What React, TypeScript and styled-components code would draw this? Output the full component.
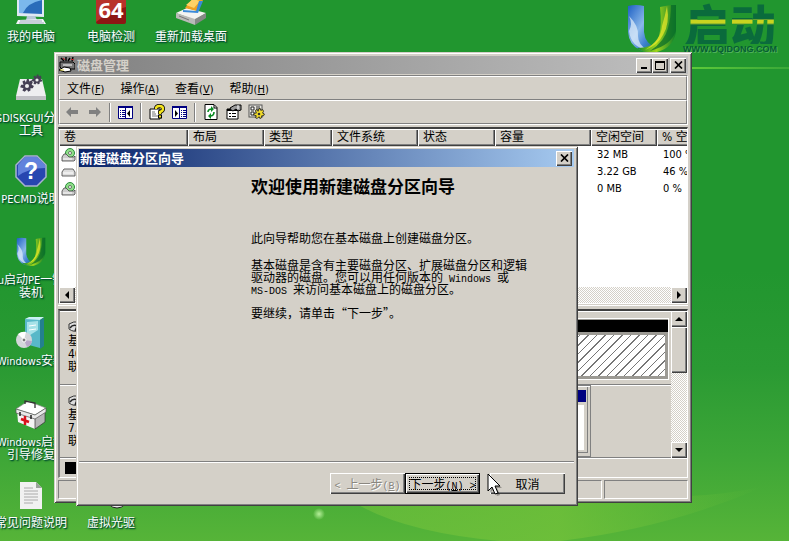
import React from "react";
import styled, { createGlobalStyle, css } from "styled-components";

const FACE = "#d4d0c8";
const SHADE = "#808080";
const DARK = "#404040";
const UI = `"DejaVu Sans Condensed", "Noto Sans CJK SC", sans-serif`;
const CJK = `"Noto Sans CJK SC", sans-serif`;

const Global = createGlobalStyle`
  * { box-sizing: border-box; }
  body { margin: 0; font: 12px/12px ${CJK}; color: #000; }
  button { font: inherit; color: inherit; margin: 0; padding: 0; border: 0; background: none; }
  svg { display: block; flex: none; }
`;

const raised = css`
  background: ${FACE};
  box-shadow: inset 1px 1px #fff, inset -1px -1px ${DARK}, inset -2px -2px ${SHADE};
`;
const dither = css`
  background: repeating-conic-gradient(#fff 0 25%, ${FACE} 0 50%) 0 0 / 2px 2px;
`;

/* ---------- desktop ---------- */
const Desktop = styled.main`
  position: relative;
  min-height: 100vh;
  overflow: hidden;
  background: linear-gradient(#21962f 0%, #21962f 50%, #2a9a33 68%, #3da637 84%, #56b438 100%);
`;
const Wallpaper = styled.svg`
  position: absolute;
  inset: 0;
  width: 100%;
  height: 100%;
`;
const Brand = styled.a`
  position: absolute;
  top: 2px;
  right: 12px;
  display: flex;
  gap: 4px;
  text-decoration: none;
`;
const BrandWords = styled.span`
  display: flex;
  flex-direction: column;
  align-items: center;
`;
const BrandName = styled.span`
  font: 900 46px/42px ${CJK};
  color: transparent;
  background: linear-gradient(#0a6b3c 0 17px, #c8d420 18px 21px, #0a6b3c 23px);
  background-clip: text;
  -webkit-background-clip: text;
`;
const BrandSite = styled.span`
  font: bold 9px/10px "Liberation Sans", sans-serif;
  color: #075c33;
  text-shadow: 1px 1px #4fb05a;
`;
const IconGrid = styled.nav`
  position: relative;
  display: grid;
  grid-auto-flow: column;
  grid-template-rows: repeat(7, 81px);
  grid-auto-columns: 80px;
  margin: -7px 0 0 -9px;
  height: 548px;
`;
const Shortcut = styled.button<{ $row: number; $col: number }>`
  grid-row: ${(p) => p.$row};
  grid-column: ${(p) => p.$col};
  display: flex;
  flex-direction: column;
  align-items: center;
  justify-content: flex-start;
  gap: 5px;
`;
const ShortcutLabel = styled.span`
  color: #fff;
  line-height: 12px;
  white-space: pre;
  text-align: center;
  text-shadow: 1px 1px 1px #053, 1px 1px 2px #042;
`;
const Latin = styled.span`
  font: 11px/1 ${UI};
`;

/* ---------- windows ---------- */
const Frame = styled.section`
  position: absolute;
  display: flex;
  flex-direction: column;
  background: ${FACE};
  box-shadow: inset 1px 1px ${FACE}, inset -1px -1px ${DARK}, inset 2px 2px #fff, inset -2px -2px ${SHADE};
`;
const MainWindow = styled(Frame)`
  inset: 52px 97px 38px 54px;
  padding: 4px;
`;
const WizardWindow = styled(Frame)`
  inset: 146px 211px 35px 76px;
  padding: 3px 4px 3px 3px;
`;
const TitleBar = styled.header<{ $active?: boolean }>`
  display: flex;
  align-items: center;
  flex: none;
  height: 18px;
  padding: 0 2px 0 1px;
  gap: 2px;
  color: ${(p) => (p.$active ? "#fff" : FACE)};
  background: ${(p) =>
    p.$active ? "linear-gradient(90deg, #0a246a, #a6caf0)" : "linear-gradient(90deg, #808080, #c0c0c0)"};
`;
const TitleText = styled.h1`
  flex: 1;
  margin: 0;
  font: bold 13px/16px ${CJK};
`;
const Captions = styled.div`
  display: flex;
`;
const CaptionButton = styled.button<{ $gap?: boolean }>`
  ${raised}
  display: grid;
  place-items: center;
  width: 16px;
  height: 15px;
  margin-left: ${(p) => (p.$gap ? "2px" : "0")};
`;

const Rebar = styled.div`
  flex: none;
  margin-top: 1px;
  border: solid;
  border-width: 1px;
  border-color: ${SHADE} #fff #fff ${SHADE};
`;
const Band = styled.div`
  display: flex;
  align-items: center;
  height: 24px;
  border: solid;
  border-width: 1px;
  border-color: #fff ${SHADE} ${SHADE} #fff;
`;
const MenuBand = styled(Band)`
  gap: 16px;
  padding-left: 7px;
`;
const MenuButton = styled.button`
  line-height: 16px;
  white-space: nowrap;
`;
const ToolButton = styled.button`
  display: grid;
  place-items: center;
  width: 23px;
  height: 22px;
`;
const Divider = styled.i`
  width: 2px;
  height: 19px;
  margin: 0 3px;
  border-left: 1px solid ${SHADE};
  border-right: 1px solid #fff;
`;

const Sunken = styled.div`
  border: solid;
  border-width: 2px 1px 1px 2px;
  border-color: ${DARK} #fff #fff ${SHADE};
`;
const ListPane = styled(Sunken)`
  flex: none;
  display: flex;
  flex-direction: column;
  height: 177px;
  margin-top: 2px;
  border-left-width: 1px;
`;
const ListView = styled.div`
  flex: 1;
  overflow: hidden;
  background: #fff;
`;
const Volumes = styled.table`
  table-layout: fixed;
  width: 658px;
  border-collapse: separate;
  border-spacing: 0;
  th {
    ${raised}
    height: 17px;
    padding: 0 5px;
    text-align: left;
    font: 12px/15px ${UI};
  }
  td {
    height: 17px;
    padding: 0 6px;
    font: 11px/16px ${UI};
    white-space: nowrap;
  }
  td:first-child { padding: 0 2px; }
`;
const ScrollRow = styled.div`
  ${dither}
  display: flex;
  justify-content: space-between;
  height: 16px;
`;
const ScrollButton = styled.button`
  ${raised}
  display: grid;
  place-items: center;
  flex: none;
  width: 16px;
  height: 16px;
`;
const Splitter = styled.div`
  flex: none;
  height: 4px;
  margin-top: 1px;
  border-top: 1px solid #fff;
`;
const LowerPane = styled(Sunken)`
  flex: 1;
  display: flex;
  flex-direction: column;
`;
const DiskArea = styled.div`
  display: flex;
  height: 147px;
`;
const DiskList = styled.div`
  flex: 1;
  display: flex;
  flex-direction: column;
`;
const DiskRow = styled.div`
  flex: 1;
  display: flex;
  border-bottom: 1px solid ${SHADE};
  box-shadow: inset 0 1px #fff;
`;
const DiskInfo = styled.div`
  width: 108px;
  padding: 10px 0 0 8px;
  font: 12px/13px ${UI};
  p { margin: 0; }
  svg { margin-bottom: 2px; }
`;
const Partition = styled.div<{ $share: string; $selected?: boolean }>`
  width: ${(p) => p.$share};
  display: flex;
  flex-direction: column;
  gap: 3px;
  margin: ${(p) => (p.$selected ? "7px 0 4px" : "0")};
  padding: ${(p) => (p.$selected ? "1px 0 0" : "4px 4px 6px")};
  border: 1px solid ${(p) => (p.$selected ? "#fff" : SHADE)};
  background: ${(p) => (p.$selected ? "#9c9a94" : FACE)};
  box-shadow: ${(p) => (p.$selected ? "none" : `inset 1px 1px #fff, inset -2px -3px ${FACE}, inset -3px -4px ${SHADE}`)};
`;
const PartitionBar = styled.div<{ $color: string }>`
  height: 12px;
  background: ${(p) => p.$color};
`;
const PartitionBody = styled.div<{ $hatched?: boolean }>`
  flex: 1;
  margin: ${(p) => (p.$hatched ? "0 3px 3px" : "0 2px 0 0")};
  background: ${(p) => (p.$hatched ? "repeating-linear-gradient(135deg, #777 0 1px, #fff 1px 6px)" : "#fff")};
`;
const ScrollColumn = styled.div`
  ${dither}
  display: flex;
  flex-direction: column;
  width: 16px;
`;
const Thumb = styled.div`
  ${raised}
  height: 46px;
  margin-bottom: auto;
`;
const Legend = styled.div`
  flex: 1;
  padding: 3px 5px;
  border-top: 1px solid #fff;
`;
const LegendSwatch = styled.i`
  display: block;
  width: 12px;
  height: 12px;
  background: #000;
`;
const StatusBar = styled.footer`
  flex: none;
  display: flex;
  gap: 2px;
  height: 19px;
  margin-top: 2px;
`;
const StatusCell = styled.div<{ $width?: string }>`
  flex: ${(p) => (p.$width ? `0 0 ${p.$width}` : "1")};
  border: solid;
  border-width: 1px;
  border-color: ${SHADE} #fff #fff ${SHADE};
`;

/* ---------- wizard ---------- */
const WizardBody = styled.div`
  flex: 1;
  padding: 9px 16px 0 172px;
  h2 { margin: 0; font: bold 17px/20px ${CJK}; }
  p { margin: 0 0 15px; line-height: 12px; white-space: pre-line; }
  p + p + p { margin-top: -3px; }
  h2 + p { margin-top: 36px; }
`;
const Mono = styled.span`
  font: 10px/0 "Liberation Mono", monospace;
  white-space: pre;
`;
const WizardFooter = styled.footer`
  flex: none;
  display: flex;
  justify-content: flex-end;
  height: 42px;
  padding: 11px 9px 0;
  border-top: 1px solid ${SHADE};
  box-shadow: inset 0 1px #fff;
`;
const PushButton = styled.button<{ $primary?: boolean; $gap?: boolean }>`
  ${raised}
  position: relative;
  width: 75px;
  height: 21px;
  margin-left: ${(p) => (p.$gap ? "10px" : "0")};
  white-space: nowrap;
  &:disabled {
    color: #8a8780;
    text-shadow: 1px 1px #fff;
  }
  ${(p) =>
    p.$primary &&
    css`
      border: 1px solid #000;
      outline: 1px dotted #000;
      outline-offset: -5px;
    `}
`;
const Pointer = styled.svg`
  position: absolute;
  left: 411px;
  top: 327px;
`;

/* ---------- drawings ---------- */
const Ribbon = ({ size = 54, id }: { size?: number; id: string }) => (
  <svg width={size} height={size} viewBox="0 0 54 54">
    <defs>
      <linearGradient id={`${id}b`} x1="0" y1="0" x2="1" y2="1">
        <stop offset="0" stopColor="#1c5fc4" />
        <stop offset=".45" stopColor="#8ab8ea" />
        <stop offset=".7" stopColor="#3d7fd0" />
        <stop offset="1" stopColor="#0f7a40" />
      </linearGradient>
      <linearGradient id={`${id}g`} x1="0" y1="0" x2="1" y2="0">
        <stop offset="0" stopColor="#128a2c" />
        <stop offset=".5" stopColor="#9fd41c" />
        <stop offset="1" stopColor="#0d7c2b" />
      </linearGradient>
    </defs>
    <path d="M3 4Q11 2 19 4V30Q20 42 32 46Q24 52 15 48Q4 43 3 30Z" fill={`url(#${id}b)`} />
    <path d="M4 14Q14 24 13 34Q13 42 22 48Q6 45 4 29Q8 22 4 14Z" fill="#e2effb" opacity=".7" />
    <path d="M35 5Q43 3 51 3V30Q48 46 32 50Q20 52 12 46Q30 46 34 34Q37 24 35 5Z" fill={`url(#${id}g)`} />
    <path d="M42 4Q45 22 38 33Q33 43 20 48Q36 38 37 24Q40 14 42 4Z" fill="#eeea2a" opacity=".7" />
    <path d="M46 3H51V28Q47 43 25 49Q40 39 43 26Q46 16 46 3Z" fill="#0a6e2a" opacity=".75" />
  </svg>
);

const Art = ({ children }: { children: React.ReactNode }) => (
  <svg width="32" height="32" viewBox="0 0 32 32">{children}</svg>
);
const Computer = () => (
  <Art>
    <path d="M2 3L29 1V24L2 23Z" fill="#dfe9f3" />
    <path d="M4 5L27 3V21L4 20Z" fill="#2a6cba" />
    <path d="M4 5L27 3V7Q12 10 8 20H4Z" fill="#7bb8ec" />
    <path d="M12 23H20L22 27H11Z" fill="#b8c8d8" />
    <path d="M3 27L28 26L31 31H1Z" fill="#f2f5f8" />
    <path d="M5 28H27M4 30H29" stroke="#9cabb8" />
  </Art>
);
const Chip64 = () => (
  <Art>
    <rect x="1" y="1" width="30" height="30" rx="2" fill="#8d1714" />
    <path d="M1 1H31V14Q14 18 1 29Z" fill="#b8322a" />
    <text x="16" y="25" textAnchor="middle" fill="#fff" fontFamily="Open Sans" fontWeight="bold" fontSize="22">64</text>
  </Art>
);
const Reload = () => (
  <Art>
    <path d="M1 20L12 15L31 20L20 27Z" fill="#f3f3f1" />
    <path d="M1 20L20 26V32L1 25Z" fill="#b9bab7" />
    <path d="M20 26L31 20V25L20 32Z" fill="#858885" />
    <path d="M4 23L14 27" stroke="#777" />
    <path d="M10 15L18 5L28 7L22 18Z" fill="#f0a020" />
    <path d="M11 12L18 6L25 8L19 15Z" fill="#ffd166" />
    <path d="M8 17L21 18L24 8L28 8L23 20L8 19Z" fill="#3b8ad8" />
  </Art>
);
const gearPath = "M0-6L1.5-6L2-4L4-5L5-3L4-1L6 0L5 2L3 2L3 4L1 5L0 3L-2 5L-4 4L-3 2L-6 1L-5-1L-3-1L-4-4L-2-5L-1-3Z";
const Gears = () => (
  <Art>
    <path d="M5 5H27L31 22H1Z" fill="#eeeef0" />
    <path d="M1 22H31V26H1Z" fill="#bfbfc4" />
    <path d={gearPath} transform="translate(12 12) scale(1.15)" fill="#453f54" />
    <circle cx="12" cy="12" r="2" fill="#eee" />
    <path d={gearPath} transform="translate(22 6) scale(.9)" fill="#453f54" />
    <circle cx="22" cy="6" r="1.6" fill="#eee" />
  </Art>
);
const Help = () => (
  <Art>
    <path d="M10 1H22L31 10V22L22 31H10L1 22V10Z" fill="#2746b0" stroke="#a9b2d0" strokeWidth="1.5" />
    <path d="M10 2H22L30 10V13Q14 13 3 21V10Z" fill="#6282dc" />
    <text x="16" y="24" textAnchor="middle" fill="#fff" fontFamily="Liberation Sans" fontWeight="bold" fontSize="23">?</text>
  </Art>
);
const Installer = () => (
  <Art>
    <path d="M10 2L25 0V31L10 27Z" fill="#58b8c8" />
    <path d="M10 2L14 0H29L25 3Z" fill="#c9f0f4" />
    <path d="M25 3L29 1V29L25 32Z" fill="#23808f" />
    <path d="M12 5L23 4V13L12 20Z" fill="#a6e2e8" />
    <path d="M14 9L21 8M14 13L21 12" stroke="#fff" />
    <circle cx="9" cy="23" r="8" fill="#d4d6da" />
    <path d="M9 23L3 17Q7 14 11 15Z" fill="#fff" />
    <path d="M9 23L17 24Q16 29 12 30Z" fill="#b8a8c8" />
    <circle cx="9" cy="23" r="2" fill="#777" stroke="#fff" />
  </Art>
);
const Medkit = () => (
  <Art>
    <path d="M1 11L13 3L31 10L20 17Z" fill="#fff" stroke="#8b8b8b" strokeWidth=".7" />
    <path d="M2 12L20 18V31L3 24Z" fill="#f4f4f4" />
    <path d="M20 18L30 11V24L20 31Z" fill="#b7b7b7" stroke="#333" strokeWidth=".7" />
    <path d="M1 11V15L20 21L31 14V10L20 17Z" fill="#e9e9e9" stroke="#555" strokeWidth=".7" />
    <path d="M10 6V3L20 5V10" fill="none" stroke="#333" strokeWidth="1.3" />
    <path d="M10 18V27M6 21L14 24" stroke="#d8121c" strokeWidth="2.5" />
    <path d="M5 14V18M16 17V21" stroke="#222" strokeWidth="1.5" />
  </Art>
);
const Note = () => (
  <Art>
    <path d="M5 3H21L27 9V30H5Z" fill="#f1f1f1" />
    <path d="M21 3V9H27Z" fill="#9aa39a" />
    <path d="M9 9H18M9 12H23M9 15H23M9 18H23M9 21H23M9 24H18" stroke="#aaa" />
  </Art>
);
const Disc = () => (
  <Art>
    <circle cx="22" cy="18" r="11" fill="#e8e8e8" stroke="#222" />
    <circle cx="22" cy="18" r="4" fill="#444" />
  </Art>
);

const AppIcon = () => (
  <svg width="16" height="16" viewBox="0 0 16 16">
    <path d="M1 5H14L16 7V12H3L1 10Z" fill="#777" stroke="#000" />
    <path d="M2 1L5 4M7 0V4M11 1L9 4M14 0L13 4" stroke="#000" strokeWidth="1.4" />
    <path d="M4 1L6 3M12 2L15 3" stroke="#c22" />
    <path d="M4 8H13" stroke="#fff" />
    <path d="M0 13L5 10L11 11L12 14L6 15Z" fill="#fff" stroke="#000" />
    <path d="M1 13H5" stroke="#dcd13a" />
  </svg>
);
const Arrow = ({ flip }: { flip?: boolean }) => (
  <svg width="14" height="12" viewBox="0 0 14 12">
    <path d="M1 6L6 1V4H13V8H6V11Z" fill="#808080" transform={flip ? "matrix(-1 0 0 1 14 0)" : undefined} />
  </svg>
);
const PaneIcon = ({ flip }: { flip?: boolean }) => (
  <svg width="15" height="13" viewBox="0 0 15 13">
    <path d="M.5 .5H14.5V12.5H.5Z" fill="#fff" stroke="#000080" />
    <path d="M0 1H15" stroke="#000080" strokeWidth="2" />
    <path d="M7.5 2V13" stroke="#000080" />
    <path d={flip ? "M9 4.5H14M9 6.5H14M9 8.5H14M9 10.500H14" : "M2 4.5H7M2 6.5H7M2 8.5H7M2 10.500H7"} stroke="#000080" strokeDasharray="1 1 3 1" />
    <path d={flip ? "M3 4V11L6 7.500Z" : "M12 4V11L9 7.500Z"} fill="#000" />
  </svg>
);
const HelpSheet = () => (
  <svg width="16" height="16" viewBox="0 0 16 16">
    <path d="M1 5H11V15H1Z" fill="#fff" stroke="#000" />
    <path d="M3 8H6M3 10H7M3 12H9" stroke="#777" />
    <path d="M7 5Q7 2 10.500 2Q14 2 14 5Q14 7 11 8V10" fill="none" stroke="#000" strokeWidth="4" />
    <path d="M7 5Q7 2 10.500 2Q14 2 14 5Q14 7 11 8V10" fill="none" stroke="#f5e51f" strokeWidth="2.400" />
    <rect x="9.500" y="11" width="3" height="3" fill="#f5e51f" stroke="#000" />
  </svg>
);
const RefreshSheet = () => (
  <svg width="16" height="16" viewBox="0 0 16 16">
    <path d="M2 .5H11L14 3.500V15.500H2Z" fill="#fff" stroke="#000" />
    <path d="M11 1V4H14" fill="none" stroke="#000" />
    <path d="M5 8Q5 5 9 5M11 8Q11 12 7 12" fill="none" stroke="#0a8a22" strokeWidth="1.600" />
    <path d="M8 2L11 5L8 8ZM8 9L5 12L8 15Z" fill="#0a8a22" />
  </svg>
);
const Properties = () => (
  <svg width="16" height="16" viewBox="0 0 16 16">
    <path d="M1 5H12V15H1Z" fill="#fff" stroke="#000" />
    <path d="M1 6H12" stroke="#000" strokeWidth="2" />
    <path d="M3 9.500H5M3 12.500H5M6 9.500H10M6 12.500H10" stroke="#000" />
    <path d="M4 4L9 1H15V6L12 7L10 5L7 7L5 6Z" fill="#999" stroke="#000" />
    <path d="M12 1V5" stroke="#fff" />
  </svg>
);
const Settings = () => (
  <svg width="17" height="16" viewBox="0 0 17 16">
    <rect x="1" y="1" width="13" height="12" fill="#e8e6e0" stroke="#555" />
    <path d="M3 3H6V6H3ZM3 8H6V11H3Z" fill="#fff" stroke="#222" />
    <path d="M8 3H12M8 5H12" stroke="#333" />
    <path d={gearPath} transform="translate(11 10) scale(.9)" fill="#f2dc2c" stroke="#222" />
    <circle cx="11" cy="10" r="1.300" fill="#333" />
  </svg>
);
const DriveIcon = ({ cd }: { cd?: boolean }) => (
  <svg width="15" height="14" viewBox="0 0 15 14">
    {cd && <circle cx="9" cy="5" r="4.500" fill="#8fe08a" stroke="#2a8c3a" />}
    {cd && <circle cx="9" cy="5" r="1.500" fill="#fff" stroke="#444" strokeWidth=".7" />}
    {cd && <path d="M1 9L3 6H5L8 9H13L14 8V12L13 13H1Z" fill="#ccc" stroke="#444" strokeWidth=".8" />}
    {!cd && <path d="M1 7L3 4H12L14 7V11H1Z" fill="#ddd" stroke="#555" strokeWidth=".9" />}
    <path d={cd ? "M2 11H11" : "M2 8H12"} stroke="#fff" />
  </svg>
);
const DiskGlyph = () => (
  <svg width="14" height="12" viewBox="0 0 14 12">
    <path d="M1 3Q5 0 12 1V9Q6 12 1 8Z" fill="#ddd" stroke="#333" />
    <path d="M2 7Q5 3 9 5L7 10" fill="none" stroke="#222" strokeWidth="1.500" />
  </svg>
);
const Cross = () => (
  <svg width="9" height="8" viewBox="0 0 9 8">
    <path d="M1 0.500L8 7.500M8 0.500L1 7.500" stroke="#000" strokeWidth="1.700" />
  </svg>
);
const Tri = ({ dir }: { dir: "left" | "right" | "up" | "down" }) => {
  const d = { left: "M6 0V8L2 4Z", right: "M2 0V8L6 4Z", up: "M0 6H8L4 2Z", down: "M0 2H8L4 6Z" }[dir];
  return (
    <svg width="8" height="8" viewBox="0 0 8 8">
      <path d={d} fill="#000" />
    </svg>
  );
};

/* ---------- data ---------- */
const shortcuts: { row: number; col: number; art: React.ReactNode; label: React.ReactNode }[] = [
  { row: 1, col: 1, art: <Computer />, label: "我的电脑" },
  { row: 1, col: 2, art: <Chip64 />, label: "电脑检测" },
  { row: 1, col: 3, art: <Reload />, label: "重新加载桌面" },
  { row: 2, col: 1, art: <Gears />, label: <><Latin>GDISKGUI</Latin>分区{"\n"}工具</> },
  { row: 3, col: 1, art: <Help />, label: <><Latin>PECMD</Latin>说明</> },
  { row: 4, col: 1, art: <Ribbon size={32} id="s" />, label: <><Latin>u</Latin>启动<Latin>PE</Latin>一键{"\n"}装机</> },
  { row: 5, col: 1, art: <Installer />, label: <><Latin>Windows</Latin>安装</> },
  { row: 6, col: 1, art: <Medkit />, label: <><Latin>Windows</Latin>启动{"\n"}引导修复</> },
  { row: 7, col: 1, art: <Note />, label: "常见问题说明" },
  { row: 7, col: 2, art: <Disc />, label: "虚拟光驱" },
];
const menus = [["文件", "F"], ["操作", "A"], ["查看", "V"], ["帮助", "H"]];
const columns: [string, number][] = [
  ["卷", 129], ["布局", 76], ["类型", 68], ["文件系统", 86], ["状态", 77], ["容量", 96], ["空闲空间", 66], ["% 空闲", 60],
];
const volumes = [
  { cd: true, free: "32 MB", pct: "100 %" },
  { cd: false, free: "3.22 GB", pct: "46 %" },
  { cd: true, free: "0 MB", pct: "0 %" },
];

export default function App() {
  return (
    <Desktop>
      <Global />
      <Wallpaper viewBox="0 0 789 541" preserveAspectRatio="none" aria-hidden>
        <defs>
          <linearGradient id="hill" x1="0" y1="0" x2="1" y2="0">
            <stop offset="0" stopColor="#74c23c" stopOpacity=".7" />
            <stop offset=".5" stopColor="#74c23a" />
            <stop offset="1" stopColor="#6cbf3a" stopOpacity="0" />
          </linearGradient>
          <linearGradient id="beam" x1="0" y1="0" x2="1" y2="0">
            <stop offset="0" stopColor="#7fe83a" />
            <stop offset="1" stopColor="#3aa838" />
          </linearGradient>
          <radialGradient id="spark">
            <stop offset="0" stopColor="#b6f09a" />
            <stop offset="1" stopColor="#b6f09a" stopOpacity="0" />
          </radialGradient>
        </defs>
        <path d="M350 500Q400 532 500 541H560Q670 528 765 486Q730 494 690 496V500Z" fill="url(#hill)" opacity=".75" />
        <rect x="600" y="67" width="189" height="2" fill="url(#beam)" />
        <circle cx="319" cy="514" r="6" fill="url(#spark)" />
      </Wallpaper>
      <Brand href="#">
        <Ribbon id="l" />
        <BrandWords>
          <BrandName>启动</BrandName>
          <BrandSite>WWW.UQIDONG.COM</BrandSite>
        </BrandWords>
      </Brand>
      <IconGrid>
        {shortcuts.map((s, i) => (
          <Shortcut key={i} $row={s.row} $col={s.col}>
            {s.art}
            <ShortcutLabel>{s.label}</ShortcutLabel>
          </Shortcut>
        ))}
      </IconGrid>

      <MainWindow>
        <TitleBar>
          <AppIcon />
          <TitleText>磁盘管理</TitleText>
          <Captions>
            <CaptionButton aria-label="最小化">
              <svg width="9" height="8"><path d="M1 7H7" stroke="#000" strokeWidth="2" /></svg>
            </CaptionButton>
            <CaptionButton aria-label="最大化">
              <svg width="10" height="9"><path d="M.5 1H9.500M.5 0V8.500H9.500V0" fill="none" stroke="#000" /><path d="M0 1H10" stroke="#000" strokeWidth="2" /></svg>
            </CaptionButton>
            <CaptionButton $gap aria-label="关闭"><Cross /></CaptionButton>
          </Captions>
        </TitleBar>
        <Rebar>
          <MenuBand as="nav">
            {menus.map(([name, key]) => (
              <MenuButton key={key}>
                {name}<Latin>(<u>{key}</u>)</Latin>
              </MenuButton>
            ))}
          </MenuBand>
          <Band>
            <ToolButton aria-label="后退"><Arrow /></ToolButton>
            <ToolButton aria-label="前进"><Arrow flip /></ToolButton>
            <Divider />
            <ToolButton aria-label="显示树"><PaneIcon /></ToolButton>
            <Divider />
            <ToolButton aria-label="帮助"><HelpSheet /></ToolButton>
            <ToolButton aria-label="操作窗格"><PaneIcon flip /></ToolButton>
            <Divider />
            <ToolButton aria-label="刷新"><RefreshSheet /></ToolButton>
            <ToolButton aria-label="属性"><Properties /></ToolButton>
            <ToolButton aria-label="设置"><Settings /></ToolButton>
          </Band>
        </Rebar>
        <ListPane>
          <ListView>
            <Volumes>
              <colgroup>{columns.map(([n, w]) => <col key={n} width={w} />)}</colgroup>
              <thead><tr>{columns.map(([n]) => <th key={n}>{n}</th>)}</tr></thead>
              <tbody>
                {volumes.map((v) => (
                  <tr key={v.free}>
                    <td><DriveIcon cd={v.cd} /></td>
                    <td /><td /><td /><td /><td />
                    <td>{v.free}</td>
                    <td>{v.pct}</td>
                  </tr>
                ))}
              </tbody>
            </Volumes>
          </ListView>
          <ScrollRow>
            <ScrollButton aria-label="向左"><Tri dir="left" /></ScrollButton>
            <ScrollButton aria-label="向右"><Tri dir="right" /></ScrollButton>
          </ScrollRow>
        </ListPane>
        <Splitter />
        <LowerPane>
          <DiskArea>
            <DiskList>
              <DiskRow>
                <DiskInfo><DiskGlyph /><p>基本</p><p>40.00 GB</p><p>联机</p></DiskInfo>
                <Partition $share="calc(100% - 110px)" $selected>
                  <PartitionBar $color="#000" />
                  <PartitionBody $hatched />
                </Partition>
              </DiskRow>
              <DiskRow>
                <DiskInfo><DiskGlyph /><p>基本</p><p>7.00 GB</p><p>联机</p></DiskInfo>
                <Partition $share="calc(100% - 188px)">
                  <PartitionBar $color="#000080" />
                  <PartitionBody />
                </Partition>
              </DiskRow>
            </DiskList>
            <ScrollColumn>
              <ScrollButton aria-label="向上"><Tri dir="up" /></ScrollButton>
              <Thumb />
              <ScrollButton aria-label="向下"><Tri dir="down" /></ScrollButton>
            </ScrollColumn>
          </DiskArea>
          <Legend><LegendSwatch /></Legend>
        </LowerPane>
        <StatusBar>
          <StatusCell />
          <StatusCell $width="84px" />
        </StatusBar>
      </MainWindow>

      <WizardWindow role="dialog">
        <TitleBar $active>
          <TitleText>新建磁盘分区向导</TitleText>
          <CaptionButton aria-label="关闭"><Cross /></CaptionButton>
        </TitleBar>
        <WizardBody>
          <h2>欢迎使用新建磁盘分区向导</h2>
          <p>此向导帮助您在基本磁盘上创建磁盘分区。</p>
          <p>
            基本磁盘是含有主要磁盘分区、扩展磁盘分区和逻辑{"\n"}
            驱动器的磁盘。您可以用任何版本的<Mono> Windows </Mono>或{"\n"}
            <Mono>MS-DOS </Mono>来访问基本磁盘上的磁盘分区。
          </p>
          <p>要继续，请单击“下一步”。</p>
        </WizardBody>
        <WizardFooter>
          <PushButton disabled><Mono>&lt; </Mono>上一步<Mono>(<u>B</u>)</Mono></PushButton>
          <PushButton $primary>下一步<Mono>(<u>N</u>) &gt;</Mono></PushButton>
          <PushButton $gap>取消</PushButton>
        </WizardFooter>
        <Pointer width="16" height="24" viewBox="0 0 16 24" aria-hidden>
          <path d="M3 3V20L7 16L10 23L13 22L10 15H15Z" fill="#000" opacity=".3" />
          <path d="M1 1V18L5 14L8 21L11 20L8 13H13Z" fill="#fff" stroke="#000" />
        </Pointer>
      </WizardWindow>
    </Desktop>
  );
}
